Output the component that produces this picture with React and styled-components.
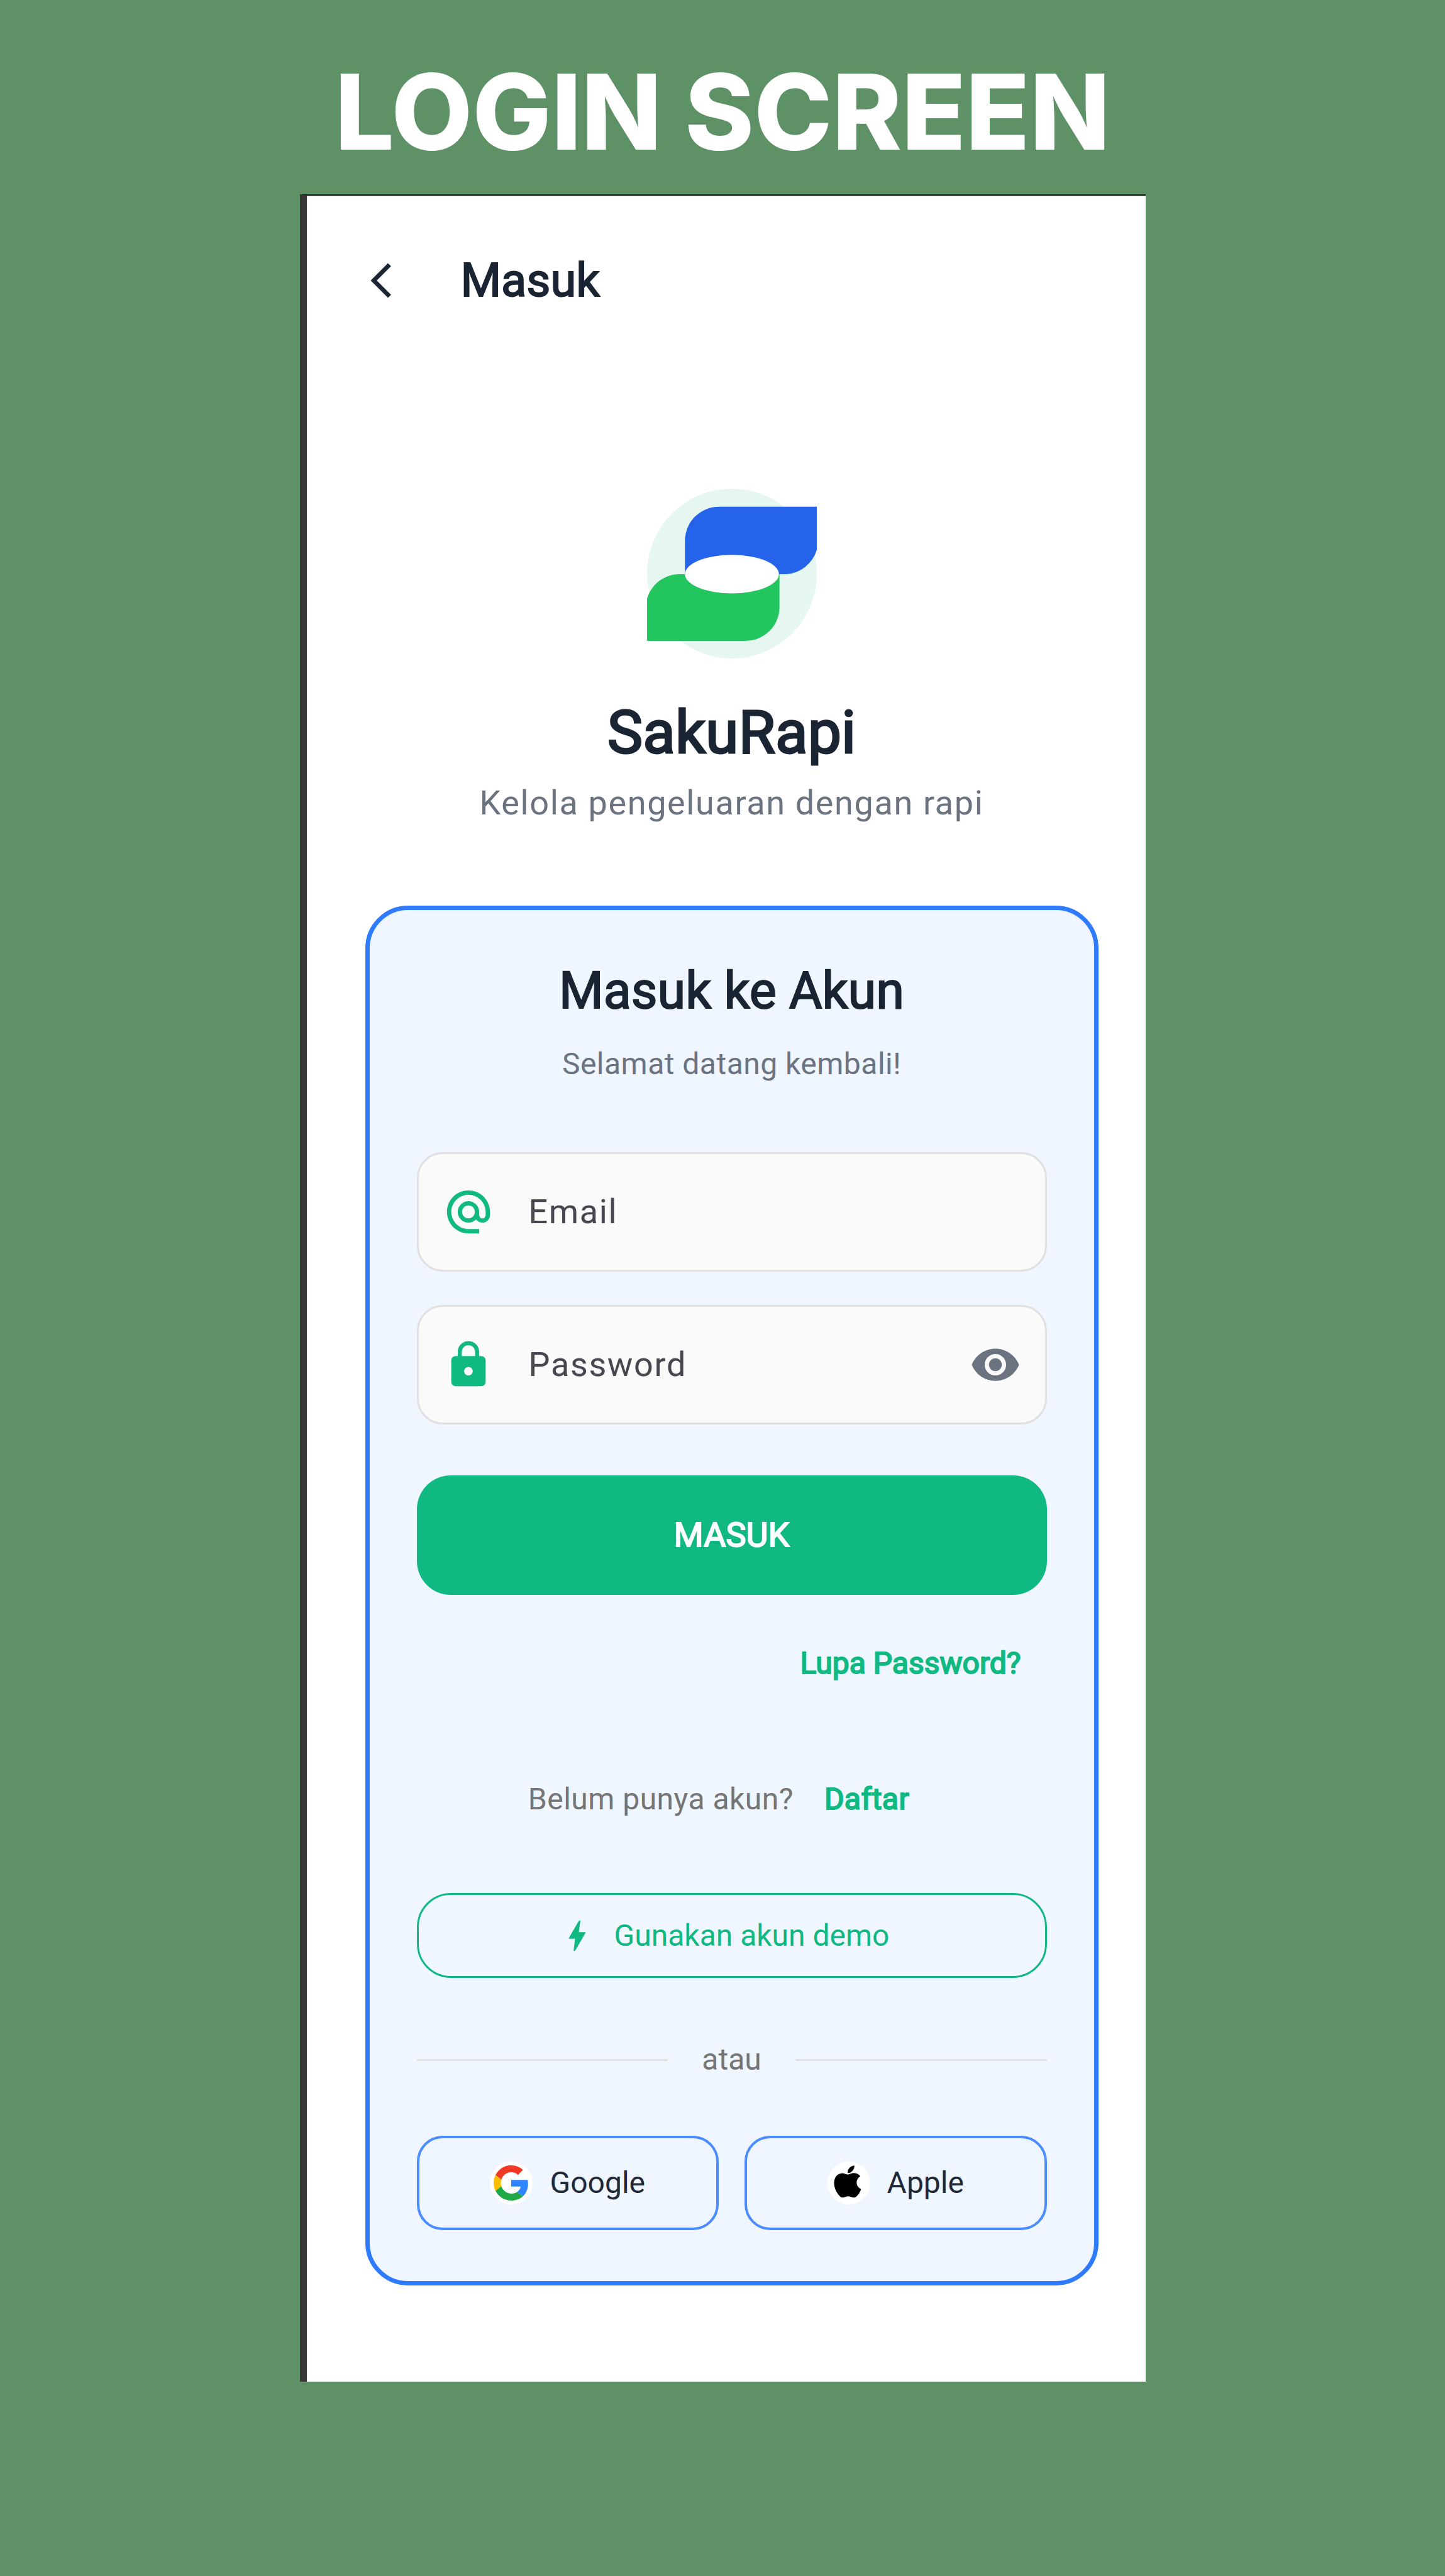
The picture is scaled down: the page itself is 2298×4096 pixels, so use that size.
import React, { useState } from "react";
import styled, { createGlobalStyle, css } from "styled-components";

const green = "#10b981";
const ink = "#1a2433";

const GlobalStyle = createGlobalStyle`
  * { box-sizing: border-box; }
  body { margin: 0; background: #5e9166; font-family: Roboto, "Liberation Sans", sans-serif; }
  h1, h2, p { margin: 0; }
  button, input { font: inherit; }
`;

const Page = styled.div`
  min-height: 100vh;
  padding: 77px 24px 72px;
  display: flex;
  flex-direction: column;
  align-items: center;
  gap: 32px;
  background: #5e9166;
`;

const Banner = styled.h1`
  font: 800 167px/200px Inter, "Liberation Sans", sans-serif;
  color: #fff;
  text-align: center;
`;

const Phone = styled.main`
  width: 100%;
  max-width: 1345px;
  padding: 40px 75px 153px 93px;
  border-left: 11px solid #3a3838;
  border-top: 2px solid #1c1c1c;
  box-shadow: inset 0 1px #8a8a8a;
  background: #fff;
`;

const TopBar = styled.header`
  height: 190px;
  margin-left: -8px;
  display: flex;
  align-items: center;
  gap: 94px;
`;

const heavy = css`
  font-weight: 400;
  -webkit-text-stroke: ${(p) => p.$stroke || 2}px currentColor;
`;

const IconButton = styled.button`
  display: flex;
  padding: 0;
  border: 0;
  background: none;
  color: ${(p) => p.$color};
  cursor: pointer;
`;

const Glyph = styled.svg`
  display: block;
  flex: none;
  width: ${(p) => p.$size}px;
  height: ${(p) => p.$size}px;
  fill: currentColor;
`;

const BarTitle = styled.h2`
  ${heavy}
  font-size: 74px;
  line-height: 96px;
  color: ${ink};
`;

const Brand = styled.section`
  padding: 236px 0 123px;
  display: flex;
  flex-direction: column;
  align-items: center;
  text-align: center;
`;

const Logo = styled.svg`
  width: 270px;
  height: 270px;
  margin-bottom: 54px;
`;

const BrandName = styled.h2`
  ${heavy}
  font-size: 95px;
  line-height: 128px;
  color: ${ink};
`;

const Tagline = styled.p`
  margin-top: 8px;
  font-size: 54px;
  line-height: 80px;
  letter-spacing: 0.03em;
  color: #6b7280;
`;

const Card = styled.form`
  padding: 81px 75px;
  border: 7px solid #2e7bff;
  border-radius: 68px;
  background: #eff6ff;
  display: flex;
  flex-direction: column;
  font-size: 48px;
  line-height: 68px;
`;

const CardTitle = styled.h2`
  ${heavy}
  font-size: 81px;
  line-height: 96px;
  text-align: center;
  color: ${ink};
`;

const Welcome = styled.p`
  margin: 34px 0 106px;
  text-align: center;
  letter-spacing: 0.01em;
  color: #6b7280;
`;

const Fields = styled.div`
  display: grid;
  gap: 53px;
`;

const Field = styled.div`
  height: 190px;
  padding: 0 38px;
  display: flex;
  align-items: center;
  gap: 55px;
  border: 3px solid #e0e0e0;
  border-radius: 41px;
  background: #fafafa;
  color: ${green};
`;

const InputStack = styled.div`
  flex: 1;
  min-width: 0;
  display: grid;
  align-items: center;
  font-size: 54px;
  line-height: 80px;
  letter-spacing: 0.03em;
  color: #49454f;

  > * { grid-area: 1 / 1; }
`;

const Input = styled.input`
  width: 100%;
  min-width: 0;
  padding: 0;
  border: 0;
  outline: 0;
  background: none;
  color: ${ink};

  &:not(:placeholder-shown) + label,
  &:focus + label { visibility: hidden; }
`;

const Label = styled.label`
  pointer-events: none;
`;

const Submit = styled.button`
  ${heavy}
  height: 190px;
  margin-top: 81px;
  border: 0;
  border-radius: 54px;
  background: ${green};
  color: #fff;
  font-size: 54px;
  cursor: pointer;
`;

const TextLink = styled.a`
  ${heavy}
  padding: 47px 41px;
  color: ${green};
  text-decoration: none;
`;

const ForgotRow = styled.div`
  margin-top: 28px;
  display: flex;
  justify-content: flex-end;
`;

const SignUpRow = styled.p`
  margin: 54px 0 68px;
  display: flex;
  align-items: center;
  justify-content: center;
  gap: 8px;
  letter-spacing: 0.01em;
  color: #757575;
`;

const DemoButton = styled.button`
  height: 135px;
  padding: 0 81px 0 54px;
  display: flex;
  align-items: center;
  justify-content: center;
  gap: 27px;
  border: 3px solid ${green};
  border-radius: 54px;
  background: none;
  color: ${green};
  cursor: pointer;
`;

const Divider = styled.div`
  margin: 96px 0 87px;
  display: flex;
  align-items: center;
  gap: 54px;
  color: #757575;

  &::before, &::after {
    content: "";
    flex: 1;
    height: 3px;
    background: #e0e0e0;
  }
`;

const SocialRow = styled.div`
  display: grid;
  grid-template-columns: 1fr 1fr;
  gap: 41px;
`;

const SocialButton = styled.button`
  height: 150px;
  padding: 0;
  display: flex;
  align-items: center;
  justify-content: center;
  gap: 27px;
  border: 4px solid #4a8cff;
  border-radius: 41px;
  background: none;
  color: #1f2937;
  cursor: pointer;
`;

const Badge = styled.span`
  width: 68px;
  height: 68px;
  display: grid;
  place-items: center;
  border-radius: 50%;
  background: #fff;
  color: #000;
`;

const paths = {
  back: "M17.77 3.77 16 2 6 12l10 10 1.77-1.77L9.54 12z",
  at: "M12 2C6.48 2 2 6.48 2 12s4.48 10 10 10h5v-2h-5c-4.34 0-8-3.66-8-8s3.66-8 8-8 8 3.66 8 8v1.43c0 .79-.71 1.57-1.5 1.57s-1.5-.78-1.5-1.57V12c0-2.76-2.24-5-5-5s-5 2.24-5 5 2.24 5 5 5c1.38 0 2.64-.56 3.54-1.47.65.89 1.77 1.47 2.96 1.47 1.97 0 3.5-1.6 3.5-3.57V12c0-5.52-4.48-10-10-10zm0 13c-1.66 0-3-1.34-3-3s1.34-3 3-3 3 1.34 3 3-1.34 3-3 3z",
  lock: "M18 8h-1V6c0-2.76-2.24-5-5-5S7 3.24 7 6v2H6c-1.1 0-2 .9-2 2v10c0 1.1.9 2 2 2h12c1.1 0 2-.9 2-2V10c0-1.1-.9-2-2-2zm-6 9c-1.1 0-2-.9-2-2s.9-2 2-2 2 .9 2 2-.9 2-2 2zm3.1-9H8.9V6c0-1.71 1.39-3.1 3.1-3.1 1.71 0 3.1 1.39 3.1 3.1v2z",
  eye: "M12 4.5C7 4.5 2.73 7.61 1 12c1.73 4.39 6 7.5 11 7.5s9.27-3.11 11-7.5c-1.73-4.39-6-7.5-11-7.5zM12 17c-2.76 0-5-2.24-5-5s2.24-5 5-5 5 2.24 5 5-2.24 5-5 5zm0-8c-1.66 0-3 1.34-3 3s1.34 3 3 3 3-1.34 3-3-1.34-3-3-3z",
  bolt: "M13 3h.9l-1 6.8h3.8q.5 0 .2.5L10.7 21h-.9l.9-7.2H7.3q-.6 0-.3-.5Z",
  apple: "M17.05 20.28c-.98.95-2.05.8-3.08.35-1.09-.46-2.09-.48-3.24 0-1.44.62-2.2.44-3.06-.35C2.79 15.25 3.51 7.59 9.05 7.31c1.35.07 2.29.74 3.08.8 1.18-.24 2.31-.93 3.57-.84 1.51.12 2.65.72 3.4 1.8-3.12 1.87-2.38 5.98.48 7.13-.57 1.5-1.31 2.99-2.54 4.09zM12.03 7.25c-.15-2.23 1.66-4.07 3.74-4.25.29 2.58-2.34 4.5-3.74 4.25z",
};

const Icon = ({ name, size, box = "0 0 24 24" }) => (
  <Glyph viewBox={box} $size={size} aria-hidden="true">
    <path d={paths[name]} />
  </Glyph>
);

const GoogleMark = () => (
  <Glyph viewBox="0 0 48 48" $size={56} aria-hidden="true">
    <path fill="#f03a25" d="M24 9.5c3.54 0 6.71 1.22 9.21 3.6l6.85-6.85C35.9 2.38 30.47 0 24 0 14.62 0 6.51 5.38 2.56 13.22l7.98 6.19C12.43 13.72 17.74 9.5 24 9.5z" />
    <path fill="#2e85ff" d="M46.98 24.55c0-1.57-.15-3.09-.38-4.55H24v9.02h12.94c-.58 2.96-2.26 5.48-4.78 7.18l7.73 6c4.51-4.18 7.09-10.36 7.09-17.65z" />
    <path fill="#fdbd00" d="M10.53 28.59c-.48-1.45-.76-2.99-.76-4.59s.27-3.14.76-4.59l-7.98-6.19C.92 16.46 0 20.12 0 24c0 3.88.92 7.54 2.56 10.78l7.97-6.19z" />
    <path fill="#1fa846" d="M24 48c6.48 0 11.93-2.13 15.89-5.81l-7.73-6c-2.15 1.45-4.92 2.3-8.16 2.3-6.26 0-11.57-4.22-13.47-9.91l-7.98 6.19C6.51 42.62 14.62 48 24 48z" />
  </Glyph>
);

const BrandLogo = () => (
  <Logo viewBox="0 0 300 300" role="img" aria-label="SakuRapi">
    <circle cx="150" cy="150" r="150" fill="#e6f7f1" />
    <path fill="#2563eb" d="M67 151V92A60 60 0 0 1 127 32H300V108A60 60 0 0 1 246 151Z" />
    <path fill="#22c55e" d="M234 151V210A60 60 0 0 1 174 269H0V194A60 60 0 0 1 54 151Z" />
    <ellipse cx="150" cy="151" rx="83" ry="34" fill="#fff" />
  </Logo>
);

export default function App() {
  const [visible, setVisible] = useState(false);

  return (
    <>
      <GlobalStyle />
      <Page>
        <Banner>LOGIN SCREEN</Banner>
        <Phone>
          <TopBar>
            <IconButton type="button" aria-label="Kembali" $color={ink}>
              <Icon name="back" size={66} />
            </IconButton>
            <BarTitle>Masuk</BarTitle>
          </TopBar>

          <Brand>
            <BrandLogo />
            <BrandName $stroke={3}>SakuRapi</BrandName>
            <Tagline>Kelola pengeluaran dengan rapi</Tagline>
          </Brand>

          <Card onSubmit={(e) => e.preventDefault()}>
            <CardTitle>Masuk ke Akun</CardTitle>
            <Welcome>Selamat datang kembali!</Welcome>

            <Fields>
              <Field>
                <Icon name="at" size={82} />
                <InputStack>
                  <Input id="email" type="email" placeholder=" " />
                  <Label htmlFor="email">Email</Label>
                </InputStack>
              </Field>
              <Field>
                <Icon name="lock" size={82} />
                <InputStack>
                  <Input id="password" type={visible ? "text" : "password"} placeholder=" " />
                  <Label htmlFor="password">Password</Label>
                </InputStack>
                <IconButton
                  type="button"
                  aria-label="Tampilkan password"
                  $color="#6b7280"
                  onClick={() => setVisible(!visible)}
                >
                  <Icon name="eye" size={82} />
                </IconButton>
              </Field>
            </Fields>

            <Submit type="submit">MASUK</Submit>

            <ForgotRow>
              <TextLink href="#lupa">Lupa Password?</TextLink>
            </ForgotRow>

            <SignUpRow>
              Belum punya akun?
              <TextLink href="#daftar">Daftar</TextLink>
            </SignUpRow>

            <DemoButton type="button">
              <Icon name="bolt" size={64} />
              Gunakan akun demo
            </DemoButton>

            <Divider>atau</Divider>

            <SocialRow>
              <SocialButton type="button">
                <Badge><GoogleMark /></Badge>
                Google
              </SocialButton>
              <SocialButton type="button">
                <Badge><Icon name="apple" size={68} box="0.7 0.8 24 24" /></Badge>
                Apple
              </SocialButton>
            </SocialRow>
          </Card>
        </Phone>
      </Page>
    </>
  );
}
